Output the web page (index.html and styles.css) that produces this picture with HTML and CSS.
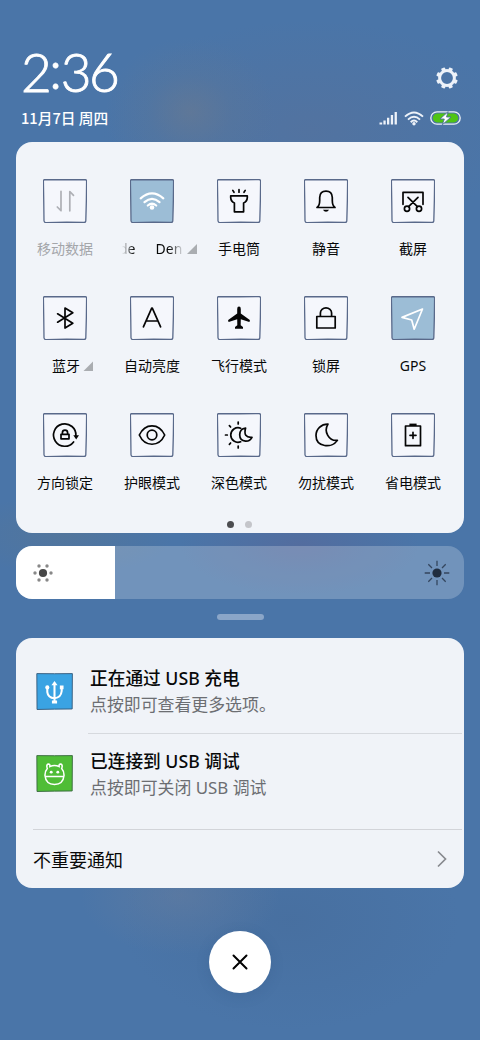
FILE: index.html
```html
<!DOCTYPE html>
<html lang="zh-CN">
<head>
<meta charset="utf-8">
<title>控制中心</title>
<link rel="stylesheet" href="styles.css">
</head>
<body>
<svg class="defs" width="0" height="0">
  <symbol id="frame" viewBox="-22 -22 44 44"><path d="M-20-21.4Q0-21.1 20-21.4Q21.7-21.3 21.6-19.5Q21.5 0 20.8 19.8Q20.6 21.5 19 21.5Q0 21 -19 21.6Q-20.8 21.6-21 19.8Q-21.2 0-21.6-20Q-21.5-21.4-20-21.4Z"/></symbol>
</svg>
<main class="screen">
  <header class="header">
    <div class="head-row">
      <div class="clock"><span>2</span><span class="colon">:</span><span>36</span></div>
      <svg class="gear" width="22" height="22" viewBox="-11 -11 22 22"><circle r="7.4" fill="none" stroke="#edf2f9" stroke-width="3"/><g fill="#edf2f9"><rect id="tooth" x="-2" y="-10.8" width="4" height="4" rx=".7" transform="rotate(22.5)"/><use href="#tooth" transform="rotate(45)"/><use href="#tooth" transform="rotate(90)"/><use href="#tooth" transform="rotate(135)"/><use href="#tooth" transform="rotate(180)"/><use href="#tooth" transform="rotate(225)"/><use href="#tooth" transform="rotate(270)"/><use href="#tooth" transform="rotate(315)"/></g></svg>
    </div>
    <div class="status-row">
      <div class="date">11月7日 周四</div>
      <div class="status">
        <svg width="19" height="14" viewBox="0 0 19 14" fill="#edf2f9"><path d="M.5 11.5h2.7v2H.5zM4.4 9.5h2.3v4H4.4zM8 6.8h2.3v6.7H8zM11.8 4h2.3v9.5h-2.3zM15.6 1h2.3v12.5h-2.3z"/></svg>
        <svg width="20" height="15" viewBox="0 0 20 15" fill="none" stroke="#edf2f9" stroke-width="1.9"><path d="M1 5.6Q10-2.8 19 5.6M4 8.6Q10 3 16 8.6M6.7 11.2Q10 8 13.3 11.2"/><circle cx="10" cy="12.7" r="1.7" fill="#edf2f9" stroke="none"/></svg>
        <svg width="31" height="14" viewBox="0 0 31 14"><rect x=".8" y=".8" width="29.4" height="12.4" rx="6.2" fill="none" stroke="#edf2f9" stroke-width="1.3"/><rect x="2.8" y="2.6" width="25.4" height="8.8" rx="4.4" fill="#4fc414"/><path d="M18.2.6 10 8h4.3l-2 5.8L21 6h-4.5Z" fill="#fff" stroke="#4b7098" stroke-width=".9"/></svg>
      </div>
    </div>
  </header>

  <section class="controls">
    <div class="tiles">
      <div class="tile off"><div class="box"><svg viewBox="-22 -22 44 44"><use href="#frame" width="44" height="44" x="-22" y="-22" class="frame"/><path class="ic" d="M-4-9.7V9.7L-7.7 6M4.8 9.8V-9.5L8.5-5.6"/></svg></div><div class="label">移动数据</div></div>
      <div class="tile on"><div class="box"><svg viewBox="-22 -22 44 44"><use href="#frame" width="44" height="44" x="-22" y="-22" class="frame"/><path class="ic thick" d="M-11.3-2.6Q0-12.5 11.3-2.6M-7.5 1.2Q0-5.4 7.5 1.2M-4.2 4.5Q0 1 4.2 4.5"/><circle cy="6.5" r="2.3" class="solid"/></svg></div><div class="label expandable"><span class="marquee"><span>de</span><span>Den</span></span><i class="corner"></i></div></div>
      <div class="tile"><div class="box"><svg viewBox="-22 -22 44 44"><use href="#frame" width="44" height="44" x="-22" y="-22" class="frame"/><path class="ic" d="M-8.3-5.2H8.3V-3.4Q8.1.5 4.6 2V10.8H-4.6V2Q-8.1.5-8.3-3.4ZM0-11.3V-8.8M-6.2-10.6-5-8.7M6.2-10.6 5-8.7"/></svg></div><div class="label">手电筒</div></div>
      <div class="tile"><div class="box"><svg viewBox="-22 -22 44 44"><use href="#frame" width="44" height="44" x="-22" y="-22" class="frame"/><path class="ic" d="M-9 6.5H9Q6.3 4.7 6.3-.5V-3.5Q6-9.8 0-9.8T-6.3-3.5V-.5Q-6.3 4.7-9 6.5Z"/><path class="solid" d="M-3 8.8H3Q2 10.8 0 10.8T-3 8.8Z"/></svg></div><div class="label">静音</div></div>
      <div class="tile"><div class="box"><svg viewBox="-22 -22 44 44"><use href="#frame" width="44" height="44" x="-22" y="-22" class="frame"/><path class="ic" d="M-10 3.3V-8.6H10V3.3M-5-3.6 4.4 5.6M5-3.6-4.4 5.6"/><circle class="ic" cx="-6" cy="7.7" r="2.6"/><circle class="ic" cx="6" cy="7.7" r="2.6"/></svg></div><div class="label">截屏</div></div>

      <div class="tile"><div class="box"><svg viewBox="-22 -22 44 44"><use href="#frame" width="44" height="44" x="-22" y="-22" class="frame"/><path class="ic" d="M-7.4-4.2 7.8 5.2 0 10V-10L7.8-5.2-7.4 4.2"/></svg></div><div class="label expandable">蓝牙<i class="corner"></i></div></div>
      <div class="tile"><div class="box"><svg viewBox="-22 -22 44 44"><use href="#frame" width="44" height="44" x="-22" y="-22" class="frame"/><path class="ic" d="M-8.6 8.8-.3-9.8H.3L8.6 8.8M-6 3H6"/></svg></div><div class="label">自动亮度</div></div>
      <div class="tile"><div class="box"><svg viewBox="-22 -22 44 44"><use href="#frame" width="44" height="44" x="-22" y="-22" class="frame"/><path class="solid" d="M0-11.4Q1.8-11.4 1.8-9V-4.4L10.8 2Q11.2 3.2 10.3 4L1.8 1.2 1.7 7.2 4 9V10.8H-4V9L-1.7 7.2-1.8 1.2-10.3 4Q-11.2 3.2-10.8 2L-1.8-4.4V-9Q-1.8-11.4 0-11.4Z"/></svg></div><div class="label">飞行模式</div></div>
      <div class="tile"><div class="box"><svg viewBox="-22 -22 44 44"><use href="#frame" width="44" height="44" x="-22" y="-22" class="frame"/><path class="ic" d="M-9.2-1.5H9.2V10H-9.2ZM-5.6-1.5V-5A5.6 5.1 0 0 1 5.6-5V-1.5"/></svg></div><div class="label">锁屏</div></div>
      <div class="tile on"><div class="box"><svg viewBox="-22 -22 44 44"><use href="#frame" width="44" height="44" x="-22" y="-22" class="frame"/><path class="ic" d="M9.5-9-11 -.6-1.3 2 1.2 11.2Z"/></svg></div><div class="label">GPS</div></div>

      <div class="tile"><div class="box"><svg viewBox="-22 -22 44 44"><use href="#frame" width="44" height="44" x="-22" y="-22" class="frame"/><path class="ic" d="M10.9 1A11.2 11.2 0 1 0 8.6 6.9M-4-.7H4V3.8H-4ZM-2.6-.7V-2.2A2.6 2.6 0 0 1 2.6-2.2V-.7"/><path class="solid" d="M8.3.3H14L11.2 4.6Z"/></svg></div><div class="label">方向锁定</div></div>
      <div class="tile"><div class="box"><svg viewBox="-22 -22 44 44"><use href="#frame" width="44" height="44" x="-22" y="-22" class="frame"/><path class="ic" d="M-12.7 0C-7-12.3 7-12.3 12.7 0C7 12.3-7 12.3-12.7 0Z"/><circle class="ic" r="4.8"/></svg></div><div class="label">护眼模式</div></div>
      <div class="tile"><div class="box"><svg viewBox="-22 -22 44 44"><use href="#frame" width="44" height="44" x="-22" y="-22" class="frame"/><path class="ic" d="M1.7-6.8A7.3 7.3 0 1 0 1.7 6.8M-.8-13V-11M-.8 11V13M-13.5 0H-11.7M-9.6-9.3-8.4-8M-9.6 9.3-8.4 8M6.6-7Q3.8 3 13 2.3Q11 6.3 6.5 6.1Q.7 5.5.7-.3Q.9-6.2 6.6-7Z"/></svg></div><div class="label">深色模式</div></div>
      <div class="tile"><div class="box"><svg viewBox="-22 -22 44 44"><use href="#frame" width="44" height="44" x="-22" y="-22" class="frame"/><path class="ic" d="M2-10.9C-2.6-3.5 2.8 6.2 11.4 5.4C6 13.5-10 12.5-10 .5C-10-6-4.8-11 2-10.9Z"/></svg></div><div class="label">勿扰模式</div></div>
      <div class="tile"><div class="box"><svg viewBox="-22 -22 44 44"><use href="#frame" width="44" height="44" x="-22" y="-22" class="frame"/><path class="ic" d="M-7.5-9H7.5V10.7H-7.5ZM-3 .3H3M0-2.7V3.3"/><path class="solid" d="M-3.6-11.4H3.6V-9H-3.6Z"/></svg></div><div class="label">省电模式</div></div>
    </div>
    <div class="dots"><i class="dot active"></i><i class="dot"></i></div>
  </section>

  <section class="slider">
    <div class="level"><svg width="20" height="20" viewBox="-10 -10 20 20"><circle r="4.1" fill="#484848"/><g fill="#888"><circle cx="-8" r="1.7"/><circle cx="8" r="1.7"/><circle cx="-4" cy="-7" r="1.7"/><circle cx="4" cy="-7" r="1.7"/><circle cx="-4" cy="7" r="1.7"/><circle cx="4" cy="7" r="1.7"/></g></svg></div>
    <svg width="26" height="26" viewBox="-13 -13 26 26"><circle r="4.6" fill="#202d3f"/><path d="M0-12.3V-7M0 7V12.3M-12.3 0H-7M7 0H12.3M-8.7-8.7-5-5M5 5 8.7 8.7M-8.7 8.7-5 5M5-5 8.7-8.7" stroke="#34465e" stroke-width="1.3"/></svg>
  </section>
  <div class="handle"></div>

  <section class="notifications">
    <article class="note first">
      <svg class="app" viewBox="-18 -18 36 36"><path d="M-17.2-17.4Q0-17.2 17.4-17.4L17.2 17Q0 17-17 17.5Z" fill="#3aa3e3" stroke="#355a7b" stroke-width=".9"/><g fill="none" stroke="#fff" stroke-width="2"><path d="M0-7V10M-7-3V.5Q-6.4 5.8 0 6.6Q6.4 5.8 7-.5V-3"/></g><path d="M0-10.3 3-6H-3ZM-2.5 8.7H2.5V11.7H-2.5ZM5.2-5.8H8.8V-2.3H5.2Z" fill="#fff"/><circle cx="-7" cy="-4" r="2" fill="#fff"/></svg>
      <div class="body"><h2>正在通过 USB 充电</h2><p>点按即可查看更多选项。</p></div>
    </article>
    <article class="note second">
      <svg class="app" viewBox="-18 -18 36 36"><path d="M-17.2-17.4Q0-17.2 17.4-17.4L17.2 17Q0 17-17 17.5Z" fill="#4fbd36" stroke="#38683f" stroke-width=".9"/><path d="M-4.5-6.8Q0-8.8 4.5-6.8Q4.2-9.5 6.2-9.3Q8.3-8.5 7-4.8Q9.3-2.2 9.3 1.7Q8.5 10.5 0 10.8Q-8.5 10.5-9.3 1.7Q-9.3-2.2-7-4.8Q-8.3-8.5-6.2-9.3Q-4.2-9.5-4.5-6.8ZM-9 3H9" fill="none" stroke="#fff" stroke-width="1.5"/><circle cx="-3.2" cy="-1.3" r="1.4" fill="#fff"/><circle cx="3.2" cy="-1.3" r="1.4" fill="#fff"/></svg>
      <div class="body"><h2>已连接到 USB 调试</h2><p>点按即可关闭 USB 调试</p></div>
    </article>
    <div class="more"><span>不重要通知</span><svg width="10" height="18" viewBox="0 0 10 18" fill="none" stroke="#87898e" stroke-width="1.7"><path d="M1 1.5 8.5 9 1 16.5"/></svg></div>
  </section>

  <button class="close" aria-label="关闭"><svg width="16" height="16" viewBox="-8 -8 16 16" stroke="#000" stroke-width="2" stroke-linecap="round"><path d="M-6.5-6.5 6.5 6.5M6.5-6.5-6.5 6.5"/></svg></button>
</main>
</body>
</html>
```
FILE: styles.css
```css
* { box-sizing: border-box; }
body { margin: 0; font-family: "Noto Sans", "Noto Sans CJK SC", sans-serif; color: #080909; }
svg { display: block; flex: none; overflow: visible; }
.defs { position: absolute; }
h2, p { margin: 0; }

.screen {
  width: 480px;
  height: 1040px;
  padding: 0 16px;
  overflow: hidden;
  display: flex;
  flex-direction: column;
  background:
    radial-gradient(ellipse 85px 75px at 190px 112px, rgba(118, 124, 135, .42), rgba(100, 120, 145, .22) 50%, transparent),
    radial-gradient(ellipse 210px 110px at 310px 130px, rgba(92, 112, 150, .45), transparent),
    radial-gradient(ellipse 120px 50px at 300px 545px, rgba(96, 96, 145, .4), transparent),
    radial-gradient(ellipse 110px 40px at 65px 535px, rgba(90, 118, 145, .5), transparent),
    radial-gradient(ellipse 100px 60px at 180px 895px, rgba(105, 126, 158, .5), transparent),
    radial-gradient(ellipse 170px 110px at 290px 920px, rgba(70, 108, 155, .6), transparent),
    #4a75a8;
}

.header { height: 142px; padding: 50px 3px 0 5px; flex: none; color: #fff; }
.head-row { display: flex; justify-content: space-between; height: 56px; padding-right: 3px; }
.clock { display: flex; margin-top: -3px; font: 300 53px/50px Lato, sans-serif; letter-spacing: -2.4px; -webkit-text-stroke: .9px #fff; }
.colon { margin: -3px 1px 0 0; }
.gear { margin-top: 17px; }
.status-row { display: flex; justify-content: space-between; align-items: center; height: 24px; }
.date { font: 500 14.7px/22px "Noto Sans CJK SC", sans-serif; }
.status { display: flex; align-items: center; gap: 6px; }

.controls { height: 391px; flex: none; border-radius: 16px; background: #f1f4f9; padding: 36.5px 7.5px 0 5.5px; }
.tiles { display: grid; grid-template-columns: repeat(5, 87px); grid-auto-rows: 117.4px; }
.tile { display: flex; flex-direction: column; align-items: center; }
.box, .box svg { width: 44px; height: 44px; }
.frame { fill: #f5f7fc; stroke: #59698a; stroke-width: 1.3; }
.ic { fill: none; stroke: #050505; stroke-width: 1.7; stroke-linecap: round; stroke-linejoin: round; }
.solid { fill: #050505; }
.on .frame { fill: #9cbdd6; }
.on .ic { stroke: #fff; }
.on .solid { fill: #fff; }
.off .ic { stroke: #aeb0b5; }
.off .label { color: #a4a6aa; }
.thick { stroke-width: 2.2; }
.label { display: flex; align-items: center; height: 20px; margin-top: 16px; font: 400 14px/20px "Noto Sans", "Noto Sans CJK SC", sans-serif; white-space: nowrap; }
.expandable { margin-left: 14px; }
.corner { width: 10px; height: 10px; margin: 1px -1px 0 3px; background: #aaadb1; clip-path: polygon(100% 0, 100% 100%, 0 100%); }
.marquee { display: flex; width: 62px; gap: 20px; overflow: hidden; mask-image: linear-gradient(90deg, transparent, #000 12px, #000 47px, transparent); }
.marquee span:first-child { margin-left: -3px; }
.dots { display: flex; justify-content: center; gap: 11px; margin-top: -9.5px; padding-left: 1px; }
.dot { width: 7px; height: 7px; border-radius: 50%; background: #c4c5ca; }
.dot.active { background: #4c4d50; }

.slider { display: flex; align-items: center; justify-content: space-between; height: 53px; margin-top: 13px; padding-right: 14px; flex: none; border-radius: 16px; overflow: hidden; background: rgba(255, 255, 255, .22); }
.level { display: flex; align-items: center; width: 99px; height: 53px; padding-left: 17px; background: #fff; }
.handle { width: 47px; height: 6px; margin: 15px auto 17.5px; border-radius: 3px; flex: none; background: #8ba6c8; }

.notifications { display: grid; grid-template-rows: 96px 95.5px 58.5px; height: 250px; border-radius: 16px; flex: none; background: #f0f3f8; }
.note { display: flex; padding-left: 20px; }
.app { width: 37px; height: 37px; }
.first .app { margin-top: 35px; }
.second .app { margin-top: 21.5px; }
.body { flex: 1; margin-left: 15px; padding-left: 2px; margin-right: 2px; }
.first .body { border-bottom: 1px solid #d6d9de; padding-top: 28.5px; }
.second .body { padding-top: 15.5px; }
.body h2 { font: 500 17.7px/24px "Noto Sans", "Noto Sans CJK SC", sans-serif; }
.body p { margin-top: 3px; font: 400 16.9px/24px "Noto Sans", "Noto Sans CJK SC", sans-serif; color: #6c6e72; }
.more { display: flex; align-items: center; justify-content: space-between; margin: 0 2px 0 17px; padding-right: 15px; border-top: 1px solid #d2d4d9; font-size: 18px; }
.close { display: flex; align-items: center; justify-content: center; width: 62px; height: 62px; margin: 43.5px auto 0; padding: 0; border: 0; border-radius: 50%; flex: none; background: #fff; box-shadow: 0 3px 14px rgba(35, 65, 105, .15); }
```
